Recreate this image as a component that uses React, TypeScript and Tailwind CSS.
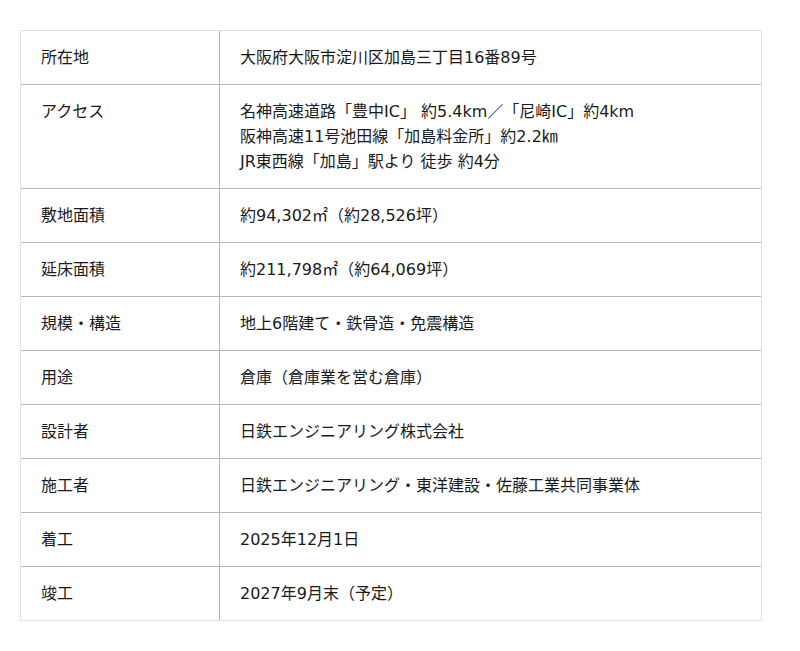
import React from "react";

const rows: [string, string[]][] = [
  ["所在地", ["大阪府大阪市淀川区加島三丁目16番89号"]],
  [
    "アクセス",
    [
      "名神高速道路「豊中IC」 約5.4km／「尼崎IC」約4km",
      "阪神高速11号池田線「加島料金所」約2.2㎞",
      "JR東西線「加島」駅より 徒歩 約4分",
    ],
  ],
  ["敷地面積", ["約94,302㎡（約28,526坪）"]],
  ["延床面積", ["約211,798㎡（約64,069坪）"]],
  ["規模・構造", ["地上6階建て・鉄骨造・免震構造"]],
  ["用途", ["倉庫（倉庫業を営む倉庫）"]],
  ["設計者", ["日鉄エンジニアリング株式会社"]],
  ["施工者", ["日鉄エンジニアリング・東洋建設・佐藤工業共同事業体"]],
  ["着工", ["2025年12月1日"]],
  ["竣工", ["2027年9月末（予定）"]],
];

export default function App() {
  return (
    <div
      className="w-[800px] h-[651px] bg-white pt-[30px] pl-[20px] text-[#1a1a1a] text-[16px]"
      style={{ fontFamily: '"DejaVu Sans", "Noto Sans CJK JP", sans-serif' }}
    >
      <div className="w-[742px] border border-[#e2e2e2]">
        {rows.map(([label, vals], i) => (
          <div
            key={label}
            className={`flex ${i > 0 ? "border-t border-[#b8b8b8]" : ""}`}
          >
            <div className="w-[199px] shrink-0 border-r border-[#b8b8b8] pl-[20px] py-[14px] leading-[25px]">
              {label}
            </div>
            <div className="flex-1 pl-[20px] py-[14px] leading-[25px]">
              {vals.map((v) => (
                <div key={v}>{v}</div>
              ))}
            </div>
          </div>
        ))}
      </div>
    </div>
  );
}
